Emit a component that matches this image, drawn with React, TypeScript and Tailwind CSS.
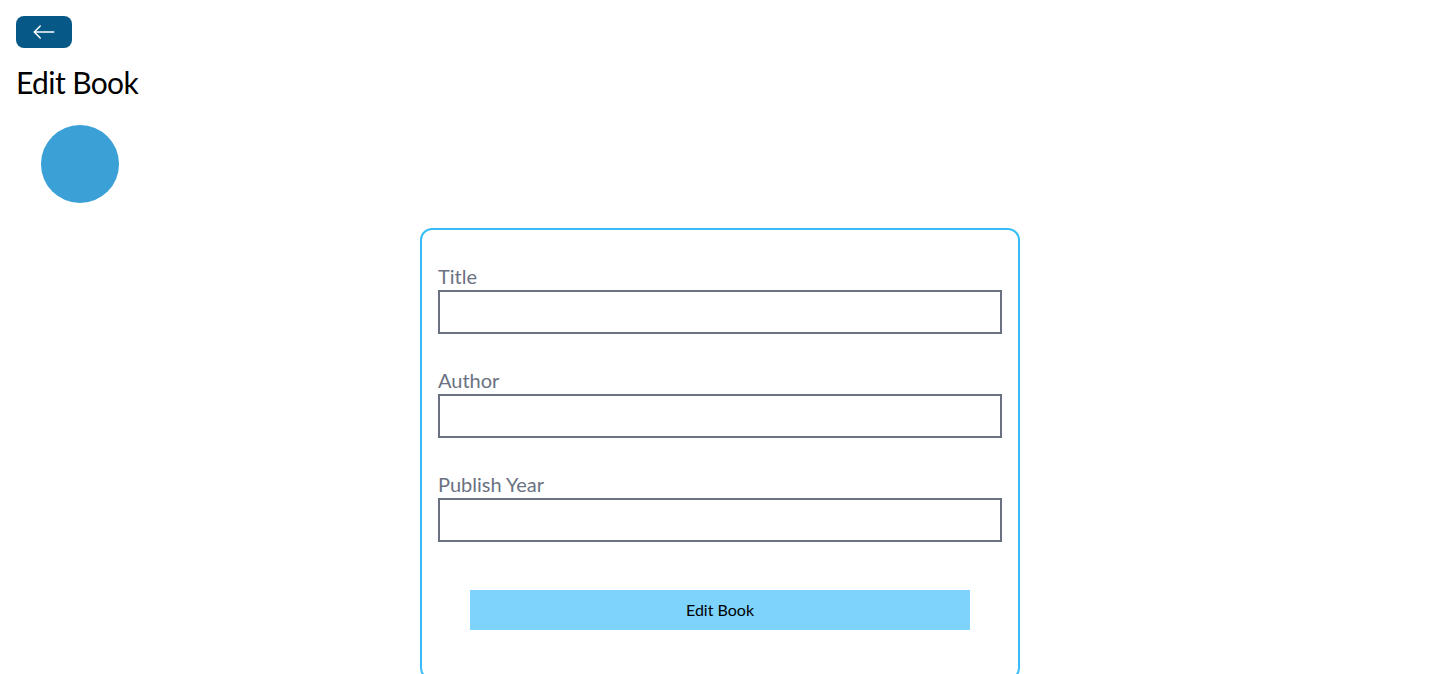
import { BsArrowLeft } from 'react-icons/bs';

function BackButton() {
  return (
    <div className="flex">
      <button className="bg-[#065986] text-white px-4 py-1 rounded-lg flex items-center">
        <BsArrowLeft className="text-2xl" />
      </button>
    </div>
  );
}

function Spinner() {
  return (
    <div className="w-16 h-16 m-8 rounded-full bg-[#3ba0d6] scale-[1.22]"></div>
  );
}

const fields = ['Title', 'Author', 'Publish Year'];

export default function App() {
  return (
    <div className="p-4 bg-white min-h-screen font-['Lato','Liberation_Sans',sans-serif] text-black">
      <BackButton />
      <h1 className="text-3xl my-4 tracking-[-0.02em]">Edit Book</h1>
      <Spinner />
      <div className="flex flex-col border-2 border-[#38bdf8] rounded-xl w-[600px] p-4 mx-auto">
        {fields.map((label) => (
          <div key={label} className="my-4">
            <label className="text-xl mr-4 text-gray-500 block">{label}</label>
            <input
              type="text"
              className="border-2 border-gray-500 px-4 py-2 w-full outline-none"
            />
          </div>
        ))}
        <button className="p-2 bg-[#7dd3fc] m-8 text-base">Edit Book</button>
      </div>
    </div>
  );
}
